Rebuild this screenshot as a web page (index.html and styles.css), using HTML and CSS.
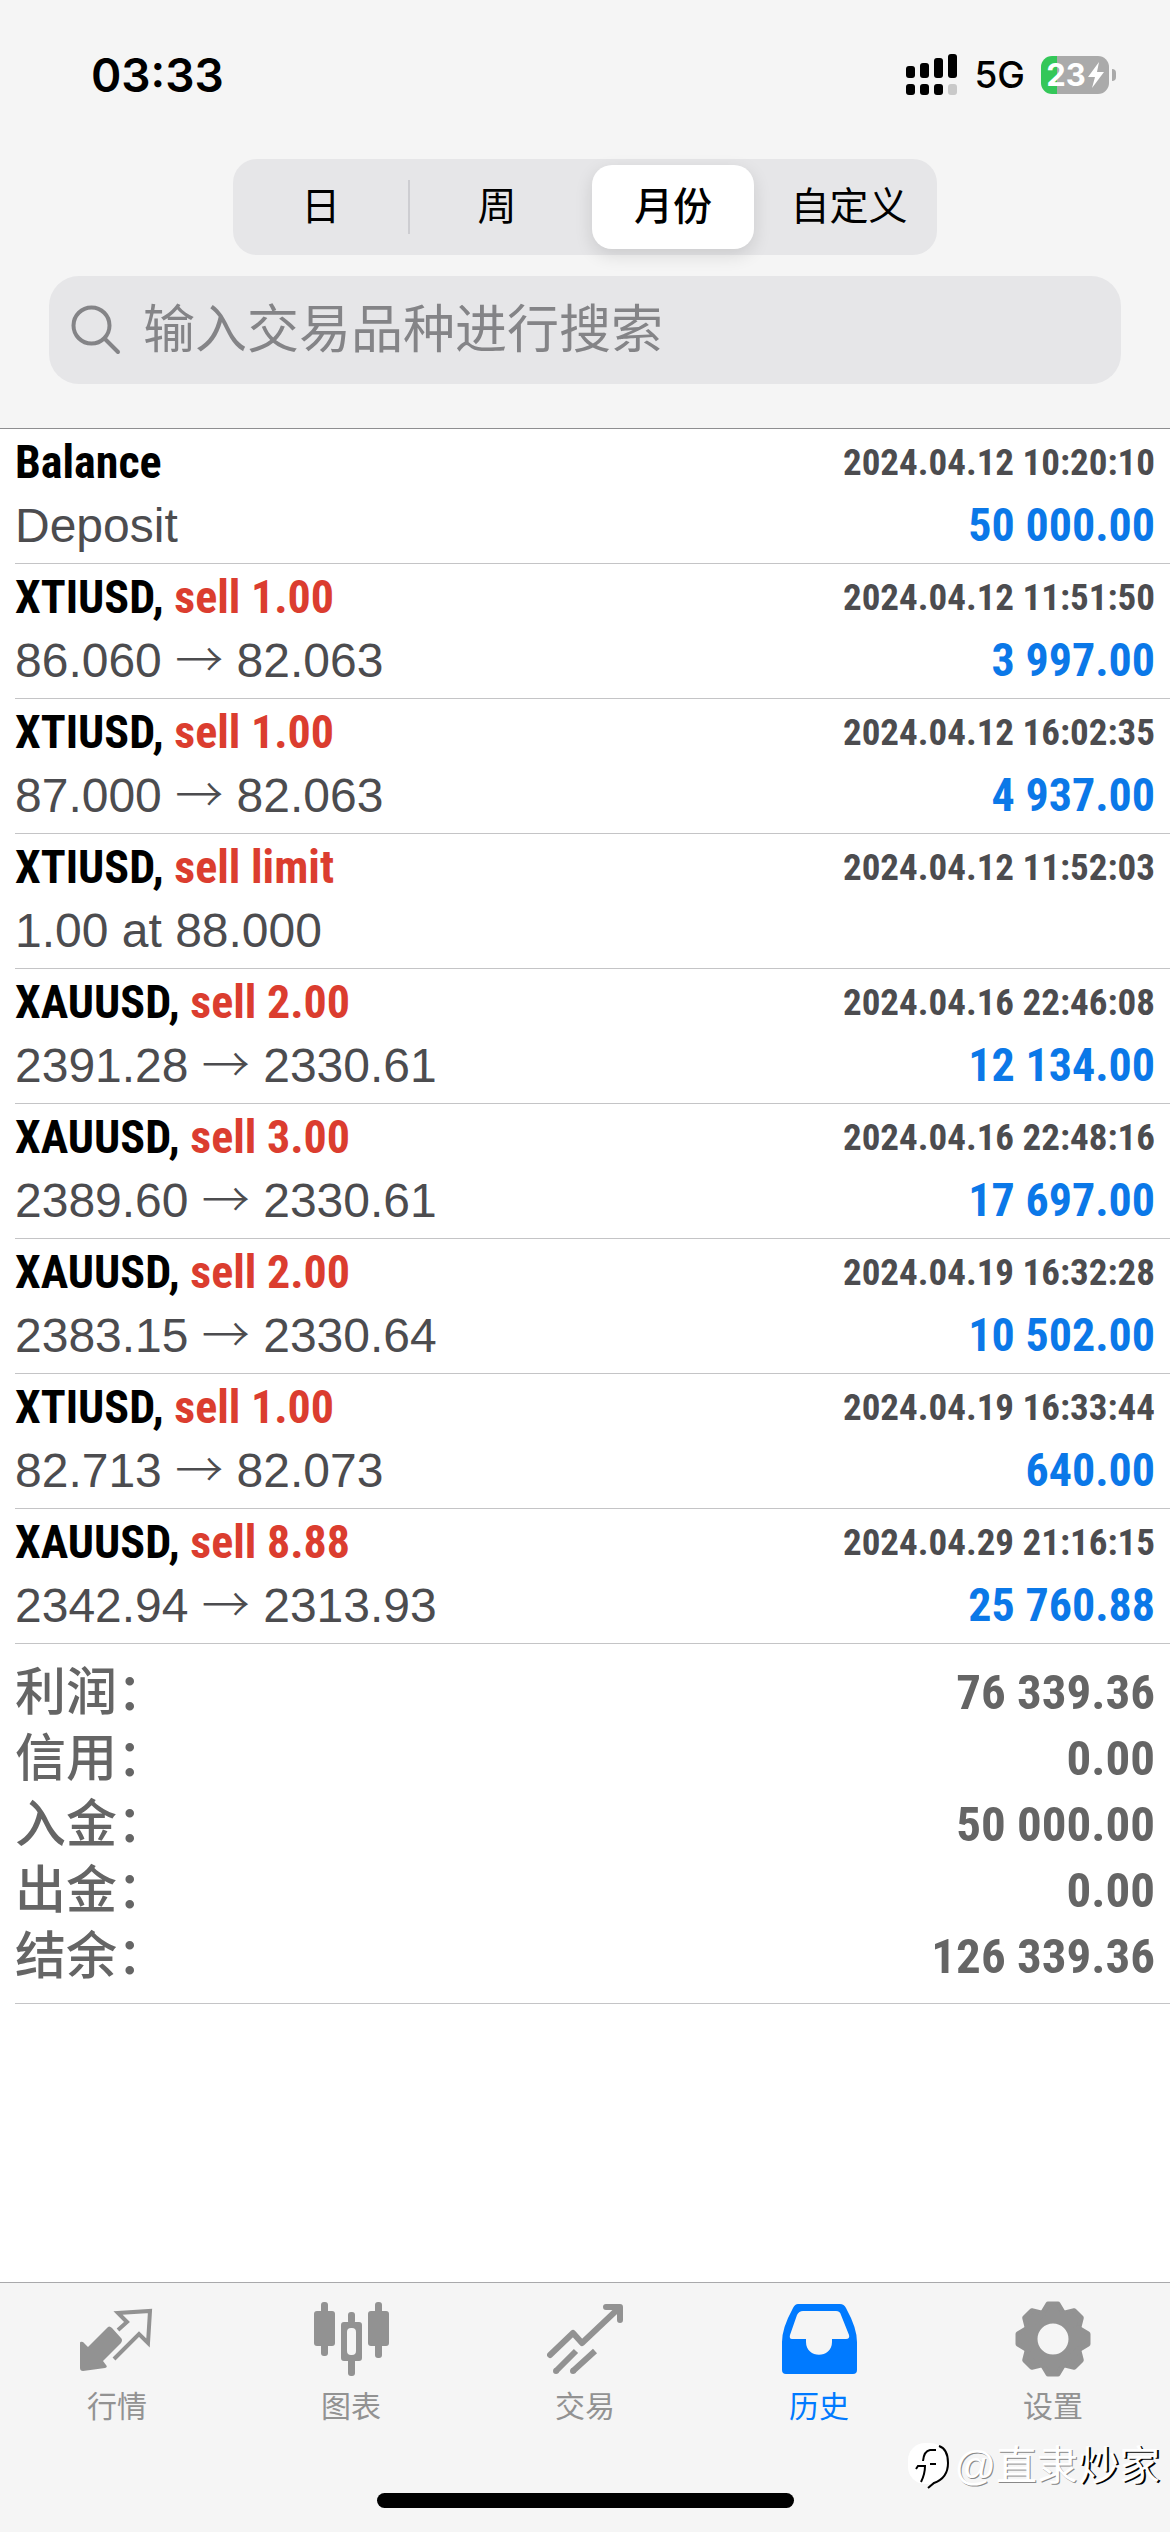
FILE: index.html
```html
<!DOCTYPE html>
<html lang="zh-CN">
<head>
<meta charset="utf-8">
<meta name="viewport" content="width=device-width, initial-scale=1">
<title>历史</title>
<link rel="stylesheet" href="styles.css">
</head>
<body>
<header class="top">
  <div class="status">
    <time class="clock">03:33</time>
    <div class="status-right">
      <svg class="signal" viewBox="0 0 52 42" aria-hidden="true">
        <rect x="0" y="12" width="9" height="12" rx="3"/><rect x="14" y="9" width="9" height="15" rx="3"/><rect x="28" y="4" width="9" height="20" rx="3"/><rect x="42" y="0" width="9" height="24" rx="3"/>
        <rect x="0" y="30" width="9" height="11" rx="3"/><rect x="14" y="30" width="9" height="11" rx="3"/><rect x="28" y="30" width="9" height="11" rx="3"/><rect x="42" y="30" width="9" height="11" rx="3" fill="#c9c9c9"/>
      </svg>
      <span class="network">5G</span>
      <div class="battery"><span>23</span><svg class="bolt" viewBox="0 0 16 26" aria-hidden="true"><path d="M11 0 0 15h7L4 26 16 10H9z"/></svg></div>
    </div>
  </div>
  <div class="segments" role="group" aria-label="时间范围">
    <button type="button" class="segment">日</button>
    <button type="button" class="segment divided">周</button>
    <button type="button" class="segment selected" aria-pressed="true">月份</button>
    <button type="button" class="segment">自定义</button>
  </div>
  <label class="search">
    <svg class="search-icon" viewBox="0 0 50 50" aria-hidden="true"><circle cx="20.500" cy="20.500" r="18"/><path d="m34 34 13 13"/></svg>
    <input type="search" placeholder="输入交易品种进行搜索" aria-label="输入交易品种进行搜索">
  </label>
</header>

<main>
  <ul class="deals">
    <li class="deal"><b class="name">Balance</b><time class="date">2024.04.12 10:20:10</time><span class="detail">Deposit</span><b class="amount">50 000.00</b></li>
    <li class="deal"><b class="name">XTIUSD, <span class="sell">sell 1.00</span></b><time class="date">2024.04.12 11:51:50</time><span class="detail">86.060 <span class="arrow">→</span> 82.063</span><b class="amount">3 997.00</b></li>
    <li class="deal"><b class="name">XTIUSD, <span class="sell">sell 1.00</span></b><time class="date">2024.04.12 16:02:35</time><span class="detail">87.000 <span class="arrow">→</span> 82.063</span><b class="amount">4 937.00</b></li>
    <li class="deal"><b class="name">XTIUSD, <span class="sell">sell limit</span></b><time class="date">2024.04.12 11:52:03</time><span class="detail">1.00 at 88.000</span></li>
    <li class="deal"><b class="name">XAUUSD, <span class="sell">sell 2.00</span></b><time class="date">2024.04.16 22:46:08</time><span class="detail">2391.28 <span class="arrow">→</span> 2330.61</span><b class="amount">12 134.00</b></li>
    <li class="deal"><b class="name">XAUUSD, <span class="sell">sell 3.00</span></b><time class="date">2024.04.16 22:48:16</time><span class="detail">2389.60 <span class="arrow">→</span> 2330.61</span><b class="amount">17 697.00</b></li>
    <li class="deal"><b class="name">XAUUSD, <span class="sell">sell 2.00</span></b><time class="date">2024.04.19 16:32:28</time><span class="detail">2383.15 <span class="arrow">→</span> 2330.64</span><b class="amount">10 502.00</b></li>
    <li class="deal"><b class="name">XTIUSD, <span class="sell">sell 1.00</span></b><time class="date">2024.04.19 16:33:44</time><span class="detail">82.713 <span class="arrow">→</span> 82.073</span><b class="amount">640.00</b></li>
    <li class="deal"><b class="name">XAUUSD, <span class="sell">sell 8.88</span></b><time class="date">2024.04.29 21:16:15</time><span class="detail">2342.94 <span class="arrow">→</span> 2313.93</span><b class="amount">25 760.88</b></li>
  </ul>
  <dl class="summary">
    <div class="total"><dt>利润：</dt><dd>76 339.36</dd></div>
    <div class="total"><dt>信用：</dt><dd>0.00</dd></div>
    <div class="total"><dt>入金：</dt><dd>50 000.00</dd></div>
    <div class="total"><dt>出金：</dt><dd>0.00</dd></div>
    <div class="total"><dt>结余：</dt><dd>126 339.36</dd></div>
  </dl>
</main>

<footer class="bottom">
  <nav class="tabs">
    <a class="tab" href="#quotes">
      <svg viewBox="0 0 76 76" aria-hidden="true"><path fill="currentColor" d="M1 42v25q0 3 3 3l22-3q3-1 1-3l-3-4 18-18q2-3 0-5L33 27q-3-3-5 0L9 46l-5-5q-3-1-3 1z"/><path fill="none" stroke="currentColor" stroke-width="4" d="m39 29 9-8-9-9 32-2-2 32-9-9-25 25"/></svg>
      行情</a>
    <a class="tab" href="#charts">
      <svg viewBox="0 0 76 76" aria-hidden="true"><g fill="currentColor"><rect x="1" y="10" width="21" height="35" rx="3"/><rect x="8" y="1" width="7" height="54" rx="3"/><rect x="55" y="10" width="21" height="35" rx="3"/><rect x="62" y="1" width="7" height="56" rx="3"/><rect x="35" y="11" width="7" height="12" rx="3"/><rect x="35" y="56" width="7" height="19" rx="3"/><path fill-rule="evenodd" d="M31 21h15q3 0 3 3v33q0 3-3 3H31q-3 0-3-3V24q0-3 3-3zm7 6q-4 0-4 4v19q0 4 4 4h1q4 0 4-4V31q0-4-4-4z"/></g></svg>
      图表</a>
    <a class="tab" href="#trade">
      <svg viewBox="0 0 76 76" aria-hidden="true"><g fill="none" stroke="currentColor" stroke-width="6" stroke-linecap="round" stroke-linejoin="round"><path d="m3 54 23-22 9 10L72 7M59 6h14v13"/><path stroke-linecap="butt" d="M9 70 29 50M26 70l22-20"/><path d="M9 70h0M26 70h0"/></g></svg>
      交易</a>
    <a class="tab active" href="#history" aria-current="page">
      <svg viewBox="0 0 76 76" aria-hidden="true"><path fill="currentColor" fill-rule="evenodd" d="M17 3h42q4 0 6 4 11 20 11 34v28q0 4-4 4H5q-4 0-4-4V41Q1 27 12 7q2-4 5-4zm5 7q-4 0-6 4L9 34q-1 4 2 4h14v3c0 17 26 17 26 0v-3h14q4 0 3-4l-8-20q-1-4-5-4z"/></svg>
      历史</a>
    <a class="tab" href="#settings">
      <svg viewBox="-38 -38 76 76" aria-hidden="true"><circle r="22" fill="none" stroke="currentColor" stroke-width="13"/><g fill="currentColor" stroke="currentColor" stroke-width="5" stroke-linejoin="round"><path id="tooth" d="M-11-25-5-35H5L11-25z"/><use href="#tooth" transform="rotate(45)"/><use href="#tooth" transform="rotate(90)"/><use href="#tooth" transform="rotate(135)"/><use href="#tooth" transform="rotate(180)"/><use href="#tooth" transform="rotate(225)"/><use href="#tooth" transform="rotate(270)"/><use href="#tooth" transform="rotate(315)"/></g></svg>
      设置</a>
  </nav>
  <div class="home-bar"></div>
  <div class="watermark">
    <svg viewBox="0 0 46 48" aria-hidden="true"><rect x="2" y="1" width="39" height="41" rx="17" fill="#fff"/><g fill="none" stroke="#000" stroke-width="2"><path d="M33 4q9 3 9 17 0 15-14 20l-6 5"/><path d="M15 40q4-8 4-16h-7l-2 3M17 19q1-10 7-11h6M24 22h6"/></g></svg>
    <span>@直隶<span class="dark">炒家</span></span>
  </div>
</footer>
</body>
</html>
```

FILE: styles.css
```css
* { box-sizing: border-box; }
body {
  margin: 0;
  min-height: 100vh;
  display: flex;
  flex-direction: column;
  background: #fff;
  color: #000;
  font-family: "Liberation Sans", "Noto Sans CJK SC", sans-serif;
}
main { flex: 1; }

.top {
  display: flex;
  flex-direction: column;
  align-items: center;
  padding-bottom: 44px;
  background: #f5f5f5;
  border-bottom: 1px solid #8e8e90;
}
.status {
  align-self: stretch;
  display: flex;
  justify-content: space-between;
  align-items: center;
  height: 159px;
  padding: 0 54px 10px 91px;
  font-family: Inter, sans-serif;
}
.clock { font-size: 46px; font-weight: 600; }
.status-right { display: flex; align-items: center; gap: 16px; }
.signal { width: 52px; height: 42px; }
.network { font-size: 37px; font-weight: 500; }
.battery {
  position: relative;
  display: flex;
  align-items: center;
  justify-content: center;
  gap: 2px;
  width: 68px;
  height: 38px;
  margin-right: 7px;
  border-radius: 11px;
  background: linear-gradient(90deg, #34c759 16px, #aaa 16px);
  color: #fff;
  font-size: 31px;
  font-weight: 700;
}
.battery::after {
  content: "";
  position: absolute;
  left: 71px;
  top: 13px;
  width: 4px;
  height: 12px;
  border-radius: 0 4px 4px 0;
  background: #aaa;
}
.bolt { width: 16px; height: 26px; fill: #fff; }

.segments {
  display: grid;
  grid-template-columns: repeat(4, 1fr);
  width: 60.2%;
  height: 96px;
  padding: 6px 0;
  border-radius: 24px;
  background: #e6e6e8;
}
.segment {
  position: relative;
  margin: 0 7px;
  padding: 0;
  border: 0;
  border-radius: 20px;
  background: none;
  color: #000;
  font: 400 39px/56px "Liberation Sans", "Noto Sans CJK SC", sans-serif;
}
.divided::before {
  content: "";
  position: absolute;
  left: -8px;
  top: 15px;
  width: 2px;
  height: 54px;
  background: #cdcdd1;
}
.selected { background: #fff; font-weight: 500; box-shadow: 0 6px 18px rgba(0, 0, 0, .12); }

.search {
  display: flex;
  align-items: center;
  gap: 22px;
  width: calc(100% - 98px);
  height: 108px;
  margin-top: 21px;
  padding: 0 22px;
  border-radius: 30px;
  background: #e6e6e8;
}
.search-icon { width: 50px; height: 50px; fill: none; stroke: #848487; stroke-width: 4; stroke-linecap: round; }
.search input {
  flex: 1;
  min-width: 0;
  padding: 0;
  border: 0;
  outline: 0;
  background: none;
  font: 400 52px/76px "Liberation Sans", "Noto Sans CJK SC", sans-serif;
}
.search input::placeholder { color: #848487; opacity: 1; }

.deals { margin: 0; padding: 0; list-style: none; }
.deal {
  display: grid;
  grid-template-columns: 1fr auto;
  margin-left: 15px;
  padding: 2px 15px 6px 0;
  border-bottom: 1px solid #c4c4c6;
  font-size: 48px;
  line-height: 63px;
}
.name, .date, .amount, .total dd { font-family: "Roboto Condensed", "Noto Sans CJK SC", sans-serif; font-weight: 700; }
.name, .amount { font-size: 46px; }
.sell { color: #db3d2f; }
.date { font-size: 37px; color: #4c4c4f; text-align: right; }
.detail { color: #4c4c4f; }
.arrow { font-family: "Noto Sans CJK SC", sans-serif; font-weight: 300; line-height: 1; }
.amount { color: #0b78e8; text-align: right; }

.summary {
  margin: 0 0 0 15px;
  padding: 16px 15px 13px 0;
  border-bottom: 1px solid #c4c4c6;
}
.total { display: flex; justify-content: space-between; height: 66px; color: #656565; font-size: 51px; line-height: 66px; }
.total dt { font-weight: 500; }
.total dd { margin: 0; font-size: 49px; }

.bottom {
  position: relative;
  padding-bottom: 24px;
  background: #f5f5f5;
  border-top: 1px solid #a9a9ab;
}
.tabs { display: grid; grid-template-columns: repeat(5, 1fr); padding-top: 18px; }
.tab {
  display: flex;
  flex-direction: column;
  align-items: center;
  gap: 8px;
  color: #929292;
  font: 400 30px/44px "Liberation Sans", "Noto Sans CJK SC", sans-serif;
  text-decoration: none;
}
.tab svg { width: 76px; height: 76px; }
.active { color: #007aff; }
.home-bar { width: 417px; height: 15px; margin: 64px auto 0; border-radius: 8px; background: #000; }
.watermark {
  position: absolute;
  right: 10px;
  bottom: 36px;
  display: flex;
  align-items: center;
  gap: 2px;
  color: #fff;
  font: 400 41px/60px "Liberation Sans", "Noto Sans CJK SC", sans-serif;
  text-shadow: 1px 1px 0 #888;
}
.watermark svg { width: 46px; height: 48px; }
.dark { text-shadow: 2px 1px 0 #000; }
```
